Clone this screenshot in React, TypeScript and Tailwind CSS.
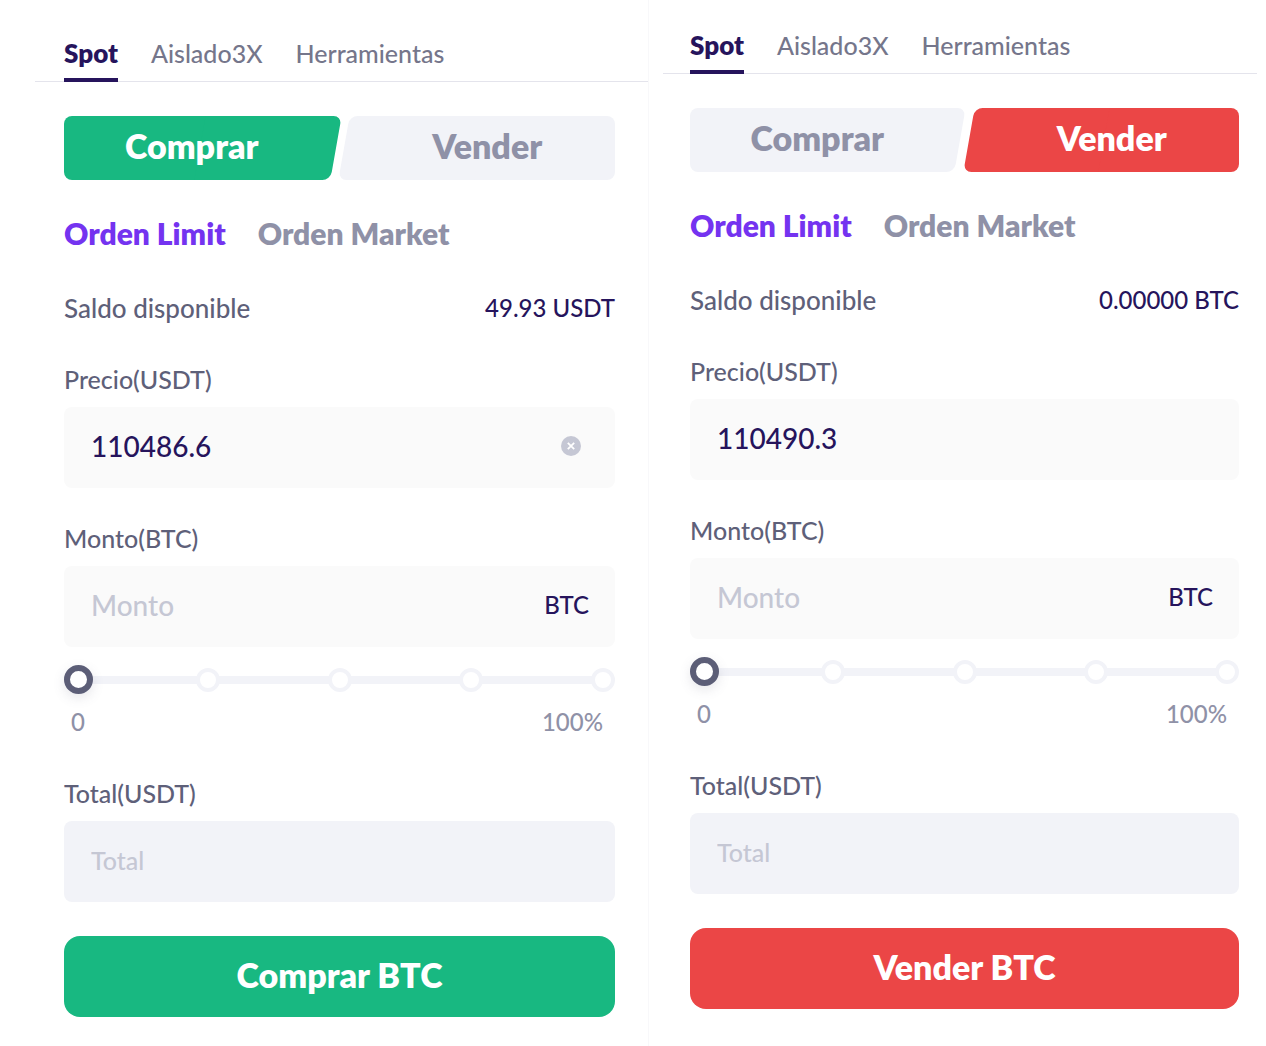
import { useId, useState } from "react";
import clsx from "clsx";

type Side = "buy" | "sell";

type TradeFormProps = {
  side: Side;
  balance: string;
  initialPrice: string;
  clearable?: boolean;
  className?: string;
};

const sections = ["Spot", "Aislado3X", "Herramientas"];
const orderTypes = ["Orden Limit", "Orden Market"];
const steps = [0, 25, 50, 75, 100];

function SectionTabs({ className }: { className?: string }) {
  return (
    <nav className={clsx("flex gap-[33px] border-b border-[#e4e4ec]", className)}>
      {sections.map((section, index) => (
        <a
          key={section}
          href="#"
          className={clsx(
            "-mb-px flex h-[54px] items-center border-b-4 leading-8",
            index === 0
              ? "border-[#26145c] text-[26px] font-extrabold text-[#26145c]"
              : "border-transparent text-[25px] font-medium text-[#75768b]"
          )}
        >
          {section}
        </a>
      ))}
    </nav>
  );
}

function SideSwitch({ side }: { side: Side }) {
  return (
    <div className="mt-[34px] flex gap-2">
      <button
        type="button"
        className={clsx(
          "relative isolate h-16 flex-1 pr-4 pb-1 text-[34px] leading-10 font-extrabold",
          "before:absolute before:inset-y-0 before:left-0 before:-z-10 before:w-3/4 before:rounded-l-lg",
          "after:absolute after:inset-y-0 after:right-0 after:-z-10 after:w-1/2 after:-skew-x-10 after:rounded-r-lg",
          side === "buy"
            ? "text-white before:bg-[#18b881] after:bg-[#18b881]"
            : "text-[#8f91a7] before:bg-[#f2f3f8] after:bg-[#f2f3f8]"
        )}
      >
        Comprar
      </button>
      <button
        type="button"
        className={clsx(
          "relative isolate h-16 flex-1 pb-1 pl-4 text-[34px] leading-10 font-extrabold",
          "before:absolute before:inset-y-0 before:right-0 before:-z-10 before:w-3/4 before:rounded-r-lg",
          "after:absolute after:inset-y-0 after:left-0 after:-z-10 after:w-1/2 after:-skew-x-10 after:rounded-l-lg",
          side === "sell"
            ? "text-white before:bg-[#eb4646] after:bg-[#eb4646]"
            : "text-[#8f91a7] before:bg-[#f2f3f8] after:bg-[#f2f3f8]"
        )}
      >
        Vender
      </button>
    </div>
  );
}

function AmountSlider() {
  const [percent, setPercent] = useState(0);

  return (
    <div className="mt-[18px]">
      <div className="relative flex h-[29px] items-center">
        <div className="absolute inset-x-3 h-2 bg-[#f2f3f8]" />
        <div className="absolute inset-x-0 flex justify-between">
          {steps.map((step) => (
            <span key={step} className="size-6 rounded-full border-4 border-[#f2f3f8] bg-white" />
          ))}
        </div>
        <input
          type="range"
          aria-label="Porcentaje"
          min={0}
          max={100}
          value={percent}
          onChange={(e) => setPercent(Number(e.target.value))}
          className="relative h-[29px] w-full cursor-pointer appearance-none bg-transparent [&::-webkit-slider-thumb]:size-[29px] [&::-webkit-slider-thumb]:appearance-none [&::-webkit-slider-thumb]:rounded-full [&::-webkit-slider-thumb]:border-[6px] [&::-webkit-slider-thumb]:border-[#5c5e77] [&::-webkit-slider-thumb]:bg-white [&::-webkit-slider-thumb]:shadow-[0_4px_12px_rgba(92,94,119,0.15)]"
        />
      </div>
      <div className="mt-3 flex justify-between pr-3 text-2xl leading-8 font-medium text-[#8f91a7]">
        <span className="w-7 text-center">0</span>
        <span>100%</span>
      </div>
    </div>
  );
}

function TradeForm({ side, balance, initialPrice, clearable, className }: TradeFormProps) {
  const id = useId();
  const [price, setPrice] = useState(initialPrice);

  return (
    <form onSubmit={(e) => e.preventDefault()} className={className}>
      <SideSwitch side={side} />

      <div className="mt-[35px] flex gap-8 text-[30px] leading-9 font-extrabold">
        {orderTypes.map((type, index) => (
          <button
            key={type}
            type="button"
            className={index === 0 ? "text-[#7433f0]" : "text-[#8f91a7]"}
          >
            {type}
          </button>
        ))}
      </div>

      <div className="mt-[41px] flex justify-between font-medium">
        <span className="text-[26px] leading-8 text-[#5e6079]">Saldo disponible</span>
        <span className="text-2xl leading-8 text-[#26145c]">{balance}</span>
      </div>

      {/* Price */}
      <label
        htmlFor={`${id}-price`}
        className="mt-[39px] block text-[25px] leading-8 font-medium text-[#5e6079]"
      >
        Precio(USDT)
      </label>
      <div className="mt-3 flex h-[81px] items-center rounded-lg bg-[#fafafa] pr-[34px] pb-1 pl-[27px]">
        <input
          id={`${id}-price`}
          value={price}
          onChange={(e) => setPrice(e.target.value)}
          className="w-full min-w-0 flex-1 bg-transparent text-[28px] leading-9 font-medium text-[#26145c] outline-none"
        />
        {clearable && (
          <button type="button" aria-label="Borrar" onClick={() => setPrice("")}>
            <svg viewBox="0 0 20 20" className="size-5">
              <circle cx="10" cy="10" r="10" fill="#c5c7d4" />
              <path d="M6.8 6.8l6.4 6.4M13.2 6.8l-6.4 6.4" stroke="#fff" strokeWidth="1.8" />
            </svg>
          </button>
        )}
      </div>

      {/* Amount */}
      <label
        htmlFor={`${id}-amount`}
        className="mt-[34px] block text-[25px] leading-8 font-medium text-[#5e6079]"
      >
        Monto(BTC)
      </label>
      <div className="mt-3 flex h-[81px] items-center rounded-lg bg-[#fafafa] pr-[26px] pb-1 pl-[27px]">
        <input
          id={`${id}-amount`}
          placeholder="Monto"
          className="w-full min-w-0 flex-1 bg-transparent text-[28px] leading-9 font-medium text-[#26145c] outline-none placeholder:text-[#c5c7d4]"
        />
        <span className="text-2xl leading-8 font-medium text-[#26145c]">BTC</span>
      </div>

      <AmountSlider />

      {/* Total */}
      <label
        htmlFor={`${id}-total`}
        className="mt-[39px] block text-[25px] leading-8 font-medium text-[#5e6079]"
      >
        Total(USDT)
      </label>
      <div className="mt-3 flex h-[81px] items-center rounded-lg bg-[#f2f3f8] px-[27px] pb-1">
        <input
          id={`${id}-total`}
          placeholder="Total"
          className="w-full min-w-0 flex-1 bg-transparent text-[25px] leading-8 font-medium text-[#26145c] outline-none placeholder:text-[#c5c7d4]"
        />
      </div>

      <button
        type="submit"
        className={clsx(
          "mt-[34px] h-[81px] w-full rounded-2xl pb-1 text-[34px] leading-10 font-extrabold text-white",
          side === "buy" ? "bg-[#18b881]" : "bg-[#eb4646]"
        )}
      >
        {side === "buy" ? "Comprar BTC" : "Vender BTC"}
      </button>
    </form>
  );
}

export default function App() {
  return (
    <main className="grid min-h-screen grid-cols-[614fr_594fr] gap-[14px] bg-white pr-[9px] pl-[35px] font-['Lato',sans-serif]">
      <section className="border-r border-[#f8f8fa] pt-7">
        <SectionTabs className="pl-[29px]" />
        <TradeForm
          side="buy"
          balance="49.93 USDT"
          initialPrice="110486.6"
          clearable
          className="pr-[33px] pl-[29px]"
        />
      </section>
      <section className="pt-5">
        <SectionTabs className="pl-[27px]" />
        <TradeForm
          side="sell"
          balance="0.00000 BTC"
          initialPrice="110490.3"
          className="pr-[18px] pl-[27px]"
        />
      </section>
    </main>
  );
}
